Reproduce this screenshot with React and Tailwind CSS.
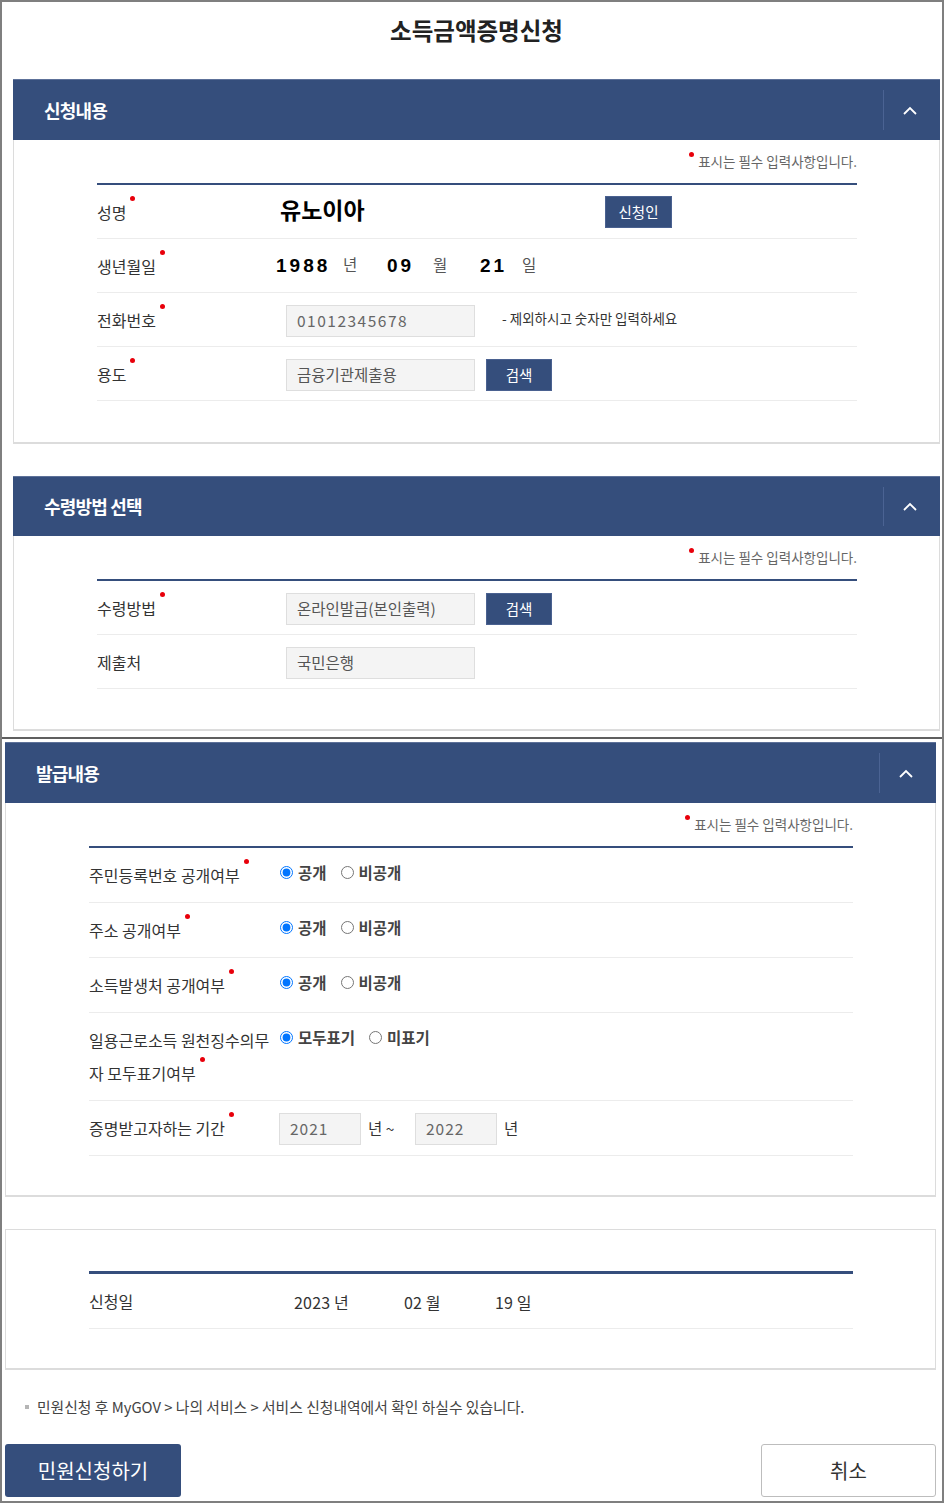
import React from "react";

function Dot({ className = "" }) {
  return (
    <span
      className={`inline-block w-[5px] h-[5px] rounded-full bg-[#e8000b] align-top ${className}`}
    />
  );
}

function Chevron() {
  return (
    <svg width="14" height="9" viewBox="0 0 14 9" fill="none">
      <polyline points="1,8 7,2 13,8" stroke="white" strokeWidth="1.8" />
    </svg>
  );
}

function Header({ title, h }) {
  return (
    <div className={`flex ${h} bg-[#354e7c] border-t border-[#5d7199]`}>
      <div className="flex-1 flex items-center pl-[31px] text-white text-[18px] font-bold tracking-[-0.8px]">
        {title}
      </div>
      <div className="my-[10px] w-px bg-[#4b6393]" />
      <div className="w-[56px] flex items-center justify-center pr-[4px]">
        <Chevron />
      </div>
    </div>
  );
}

function Required() {
  return (
    <div className="flex justify-end items-start h-[16px]">
      <Dot className="-mt-[1px]" />
      <span className="ml-[4px] text-[13.5px] leading-[16px] text-[#666]">
        표시는 필수 입력사항입니다.
      </span>
    </div>
  );
}

function Row({ label, req, lw, pb, children, valueClass = "h-[33px]" }) {
  return (
    <div className={`flex items-start border-b border-[#ececec] pt-[11px] ${pb}`}>
      <div className={`${lw} shrink-0 pr-[4px] text-[16px] leading-[33px] text-[#333]`}>
        {label}
        {req && <Dot className="ml-[4px]" />}
      </div>
      <div className={`flex items-center ${valueClass}`}>{children}</div>
    </div>
  );
}

function Field({ w, children, className = "" }) {
  return (
    <div
      className={`${w} h-[32px] flex items-center pl-[10px] bg-[#f4f4f4] border border-[#dedede] text-[15.5px] text-[#555] ${className}`}
    >
      {children}
    </div>
  );
}

function Btn({ w, children, className = "" }) {
  return (
    <div
      className={`${w} h-[32px] flex items-center justify-center bg-[#354e7c] border border-[#4a6190] text-white text-[14.5px] ${className}`}
    >
      {children}
    </div>
  );
}

function Radio({ name, checked, label, className = "" }) {
  return (
    <label className={`flex items-center ${className}`}>
      <input
        type="radio"
        name={name}
        defaultChecked={checked}
        className="m-0 w-[13px] h-[13px]"
      />
      <span className="ml-[5px] font-bold text-[#444] text-[15.5px]">{label}</span>
    </label>
  );
}

function RadioPair({ name, a, b }) {
  return (
    <>
      <Radio name={name} checked label={a} className="ml-[1px]" />
      <Radio name={name} label={b} className="ml-[14px]" />
    </>
  );
}

export default function App() {
  const top = { lw: "w-[189px]", pb: "pb-[9px]" };
  const bot = { lw: "w-[190px]", pb: "pb-[10px]" };
  const num = "font-['Liberation_Sans',sans-serif] font-bold text-[19px] tracking-[3px] text-black";
  return (
    <div className="w-[944px] h-[1503px] border-2 border-[#7f7f7f] bg-white overflow-hidden font-['Noto_Sans_CJK_KR','Noto_Sans',sans-serif] text-[#333]">
      {/* Top block */}
      <div className="pl-[11px] pr-[2px]">
        <div className="h-[77px] pt-[14px] text-center text-[23.5px] font-bold leading-[28px] text-[#222]">
          소득금액증명신청
        </div>

        <Header title="신청내용" h="h-[61px]" />
        <div className="border-x border-b-2 border-[#dcdcdc] pt-[13px] pb-[41px] pl-[83px] pr-[82px]">
          <Required />
          <div className="mt-[14px] h-[2px] bg-[#354e7c]" />
          <Row label="성명" req {...top}>
            <span className="-ml-[6px] w-[325px] text-[23px] font-bold text-black leading-none -mt-[6px]">
              유노이아
            </span>
            <Btn w="w-[67px]" className="-mt-[2px]">신청인</Btn>
          </Row>
          <Row label="생년월일" req {...top}>
            <div className="-ml-[10px] flex items-center">
              <span className={`w-[67px] ${num}`}>1988</span>
              <span className="w-[44px] text-[15.5px] text-[#555] -mt-[4px]">년</span>
              <span className={`w-[46px] ${num}`}>09</span>
              <span className="w-[47px] text-[15.5px] text-[#555] -mt-[4px]">월</span>
              <span className={`w-[42px] ${num}`}>21</span>
              <span className="text-[15.5px] text-[#555] -mt-[4px]">일</span>
            </div>
          </Row>
          <Row label="전화번호" req {...top}>
            <Field w="w-[189px]" className="tracking-[1.5px] text-[#666]">
              01012345678
            </Field>
            <span className="ml-[27px] text-[13.5px] text-[#333] -mt-[4px]">
              - 제외하시고 숫자만 입력하세요
            </span>
          </Row>
          <Row label="용도" req {...top}>
            <Field w="w-[189px]">금융기관제출용</Field>
            <Btn w="w-[66px]" className="ml-[11px]">
              검색
            </Btn>
          </Row>
        </div>

        <div className="h-[32px]" />

        <Header title="수령방법 선택" h="h-[60px]" />
        <div className="border-x border-b-2 border-[#dcdcdc] pt-[13px] pb-[40px] pl-[83px] pr-[82px]">
          <Required />
          <div className="mt-[14px] h-[2px] bg-[#354e7c]" />
          <Row label="수령방법" req {...top}>
            <Field w="w-[189px]">온라인발급(본인출력)</Field>
            <Btn w="w-[66px]" className="ml-[11px]">
              검색
            </Btn>
          </Row>
          <Row label="제출처" {...top}>
            <Field w="w-[189px]">국민은행</Field>
          </Row>
        </div>
      </div>

      {/* seam */}
      <div className="h-[6px]" />
      <div className="h-[2px] bg-[#5f5f5f]" />
      <div className="h-[3px]" />

      {/* Bottom block */}
      <div className="pl-[3px] pr-[6px]">
        <Header title="발급내용" h="h-[61px]" />
        <div className="border-x border-b-2 border-[#dcdcdc] pt-[13px] pb-[39px] pl-[83px] pr-[82px]">
          <Required />
          <div className="mt-[14px] h-[2px] bg-[#354e7c]" />
          <Row label="주민등록번호 공개여부" req {...bot} valueClass="h-[27px]">
            <RadioPair name="r1" a="공개" b="비공개" />
          </Row>
          <Row label="주소 공개여부" req {...bot} valueClass="h-[27px]">
            <RadioPair name="r2" a="공개" b="비공개" />
          </Row>
          <Row label="소득발생처 공개여부" req {...bot} valueClass="h-[27px]">
            <RadioPair name="r3" a="공개" b="비공개" />
          </Row>
          <Row label="일용근로소득 원천징수의무자 모두표기여부" req {...bot} valueClass="h-[27px]">
            <RadioPair name="r4" a="모두표기" b="미표기" />
          </Row>
          <Row label="증명받고자하는 기간" req {...bot}>
            <Field w="w-[82px]" className="tracking-[1px] text-[#666]">
              2021
            </Field>
            <span className="ml-[7px] w-[40px] text-[15.5px] text-[#333]">년 ~</span>
            <Field w="w-[82px]" className="ml-[7px] tracking-[1px] text-[#666]">
              2022
            </Field>
            <span className="ml-[7px] text-[15.5px] text-[#333]">년</span>
          </Row>
        </div>

        <div className="h-[32px]" />

        <div className="border-x border-t border-b-2 border-[#dcdcdc] pt-[41px] pb-[39px] pl-[83px] pr-[82px]">
          <div className="h-[3px] bg-[#354e7c]" />
          <div className="flex items-start border-b border-[#ececec] pt-[11px] pb-[10px]">
            <div className="w-[190px] shrink-0 text-[16px] leading-[33px] text-[#333]">
              신청일
            </div>
            <div className="flex items-center h-[33px] ml-[15px] text-[16px] text-[#333]">
              <span className="w-[110px]">
                <span className="tracking-[0.2px]">2023</span> 년
              </span>
              <span className="w-[91px]">
                <span className="tracking-[0.2px]">02</span> 월
              </span>
              <span>
                <span className="tracking-[0.2px]">19</span> 일
              </span>
            </div>
          </div>
        </div>

        <div className="mt-[29px] h-[16px] flex items-center pl-[20px]">
          <span className="w-[4px] h-[4px] bg-[#b5b5b5]" />
          <span className="ml-[8px] text-[14.8px] leading-[16px] text-[#444]">
            민원신청 후 MyGOV &gt; 나의 서비스 &gt; 서비스 신청내역에서 확인 하실수 있습니다.
          </span>
        </div>

        <div className="mt-[29px] flex justify-between">
          <div className="w-[176px] h-[53px] rounded-[3px] bg-[#354e7c] flex items-center justify-center text-white text-[20px]">
            민원신청하기
          </div>
          <div className="w-[175px] h-[53px] rounded-[3px] bg-white border border-[#bdbdbd] flex items-center justify-center text-[#333] text-[20px]">
            취소
          </div>
        </div>
      </div>
    </div>
  );
}
